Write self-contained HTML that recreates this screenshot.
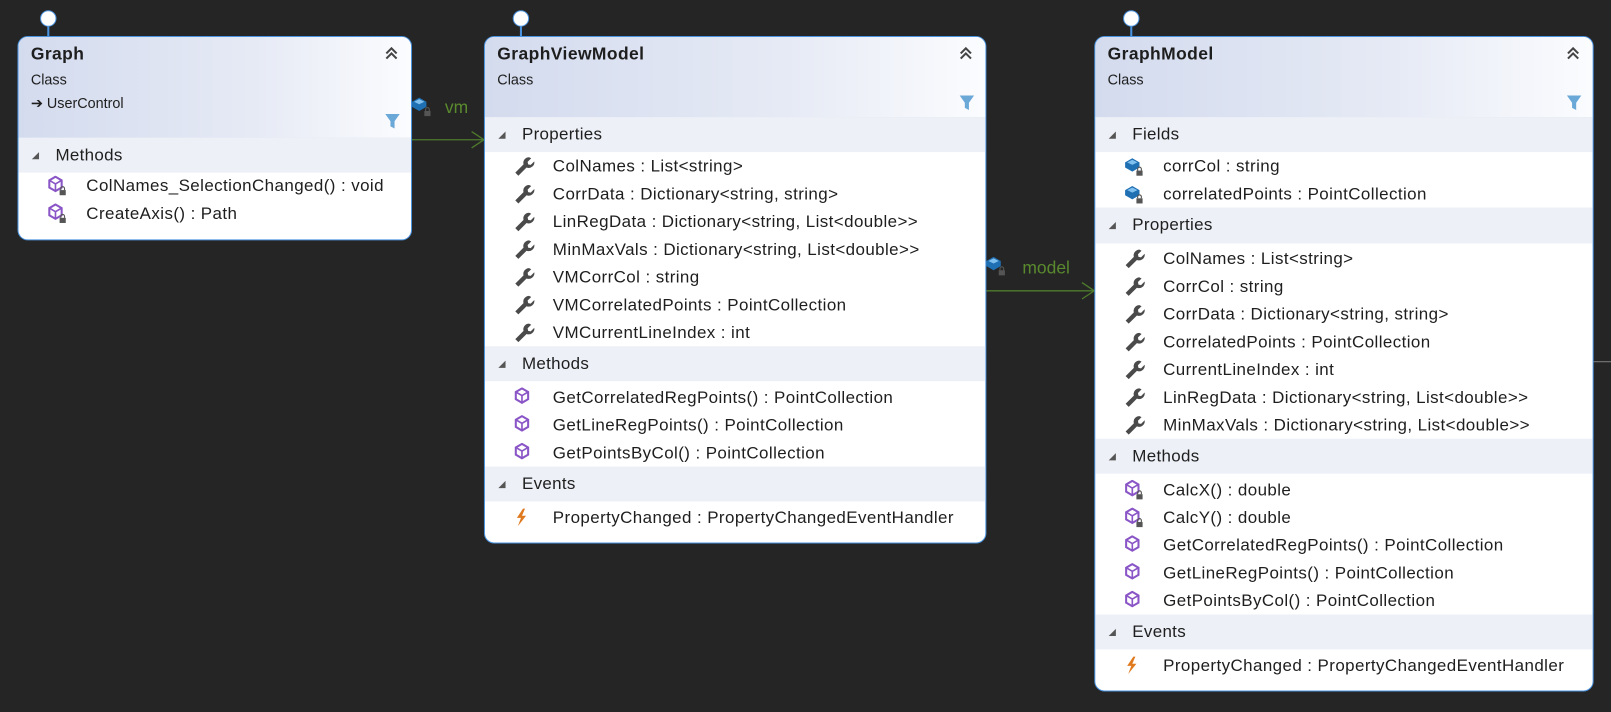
<!DOCTYPE html>
<html><head><meta charset="utf-8"><style>
html,body{margin:0;padding:0;background:#252525;width:1611px;height:712px;overflow:hidden}
#w{position:absolute;left:0;top:0;width:1568px;height:693px;transform:scale(1.0275);transform-origin:0 0;font-family:"Liberation Sans",sans-serif;color:#1e1e1e}
.box{position:absolute;background:#fff;border:1.5px solid #4a93e0;border-radius:10px;overflow:hidden;box-sizing:border-box}
.hd{position:absolute;left:0;top:0;right:0;background:linear-gradient(90deg,#d3dbee 0%,#e6eaf5 60%,#fbfcfe 100%);border-bottom:1px solid #d8dce6}
.t{position:absolute;left:12px;top:7px;font-weight:bold;font-size:17px;letter-spacing:0.4px}
.c{position:absolute;left:12px;top:33px;font-size:14px}
.u{position:absolute;left:12px;top:56px;font-size:14px}
.sh{position:absolute;left:0;right:0;height:34px;background:#edf0f7;font-size:16.5px;line-height:35px;letter-spacing:0.3px}
.sh span{position:absolute;left:36px}
.sh i{position:absolute;left:13px;top:14px;width:0;height:0;border-left:7px solid transparent;border-bottom:7px solid #555}
.r{position:absolute;left:0;right:0;height:27px;line-height:28px;font-size:16.5px;letter-spacing:0.4px;white-space:nowrap}
.r span{position:absolute;left:66px}
.r svg{position:absolute;left:28px;top:4px}
.chev{position:absolute;right:12px;top:8px}
.fil{position:absolute;right:10px}
.circ{position:absolute;width:14px;height:14px;border-radius:50%;background:#fff;border:1.5px solid #4a93e0;top:10px}
.vl{position:absolute;width:1.5px;background:#4a93e0;top:25px;height:11px}
.lbl{position:absolute;color:#5a8a2e;font-size:17px}
</style></head><body><div id="w">
<svg width="0" height="0" style="position:absolute">
<defs>
<g id="wr"><path d="M15 1a5.5 5.5 0 0 0-5.5 7L1.5 16l3 3 8-8A5.5 5.5 0 0 0 20 5l-3.5 3.5-2.5-.5-.5-2.5L17 2z" fill="#4a4a4a"/></g>
<g id="mt"><path d="M8 1l6 3.5v7L8 15l-6-3.5v-7z" fill="none" stroke="#8a55c6" stroke-width="2"/><path d="M2 4.5L8 8l6-3.5M8 8v7" fill="none" stroke="#8a55c6" stroke-width="1.6"/></g>
<g id="lk"><rect x="12" y="14" width="6" height="5" fill="#555"/><path d="M13.2 14v-1.5a1.8 1.8 0 0 1 3.6 0V14" fill="none" stroke="#555" stroke-width="1.1"/></g>
<g id="fd"><path d="M1 6l7-4 7 4v5l-7 4-7-4z" fill="#1f6fb3"/><path d="M3 6l5-2.5 5 2.5-5 2.5z" fill="#7fc0ee"/></g>
<g id="ev"><path d="M9 1L3 10h4l-3 8 8-10H8l3-7z" fill="#e07a1f"/></g>
<g id="ch"><path d="M2 8l5-5 5 5M2 13l5-5 5 5" fill="none" stroke="#444" stroke-width="2"/></g>
<g id="fi"><path d="M1 1h14l-5 7v7l-4-2V8z" fill="#6aa8d8"/></g>
</defs></svg>

<div class="vl" style="left:46px"></div><div class="circ" style="left:39px"></div>
<div class="vl" style="left:506px"></div><div class="circ" style="left:499px"></div>
<div class="vl" style="left:1100px"></div><div class="circ" style="left:1093px"></div>

<svg style="position:absolute;left:0;top:0" width="1568" height="693">
<path d="M400 136H471M459 128l12 8-12 8" fill="none" stroke="#4e7a2c" stroke-width="1.3"/>
<path d="M959 283H1065M1053 275l12 8-12 8" fill="none" stroke="#4e7a2c" stroke-width="1.3"/>
<path d="M1550 352H1568" stroke="#777" stroke-width="1"/>
<g transform="translate(400,93)"><use href="#fd"/><use href="#lk" transform="translate(1,1)"/></g>
<g transform="translate(959,248)"><use href="#fd"/><use href="#lk" transform="translate(1,1)"/></g>
</svg>
<div class="lbl" style="left:433px;top:95px">vm</div>
<div class="lbl" style="left:995px;top:251px">model</div>

<div class="box" style="left:17px;top:35px;width:384px;height:199px">
<div class="hd" style="height:98px"><div class="t">Graph</div><div class="c">Class</div><div class="u">➔ UserControl</div>
<svg class="chev" width="14" height="14"><use href="#ch"/></svg><svg class="fil" style="top:74px" width="16" height="16"><use href="#fi"/></svg></div>
<div class="sh" style="top:98px"><i></i><span>Methods</span></div>
<div class="r" style="top:131px"><svg width="22" height="20"><use href="#mt"/><use href="#lk"/></svg><span>ColNames_SelectionChanged() : void</span></div>
<div class="r" style="top:158px"><svg width="22" height="20"><use href="#mt"/><use href="#lk"/></svg><span>CreateAxis() : Path</span></div>
</div>

<div class="box" style="left:471px;top:35px;width:489px;height:494px">
<div class="hd" style="height:78px"><div class="t">GraphViewModel</div><div class="c">Class</div>
<svg class="chev" width="14" height="14"><use href="#ch"/></svg><svg class="fil" style="top:56px" width="16" height="16"><use href="#fi"/></svg></div>
<div class="sh" style="top:78px"><i></i><span>Properties</span></div>
<div class="r" style="top:112px"><svg width="22" height="20"><use href="#wr"/></svg><span>ColNames : List&lt;string&gt;</span></div>
<div class="r" style="top:139px"><svg width="22" height="20"><use href="#wr"/></svg><span>CorrData : Dictionary&lt;string, string&gt;</span></div>
<div class="r" style="top:166px"><svg width="22" height="20"><use href="#wr"/></svg><span>LinRegData : Dictionary&lt;string, List&lt;double&gt;&gt;</span></div>
<div class="r" style="top:193px"><svg width="22" height="20"><use href="#wr"/></svg><span>MinMaxVals : Dictionary&lt;string, List&lt;double&gt;&gt;</span></div>
<div class="r" style="top:220px"><svg width="22" height="20"><use href="#wr"/></svg><span>VMCorrCol : string</span></div>
<div class="r" style="top:247px"><svg width="22" height="20"><use href="#wr"/></svg><span>VMCorrelatedPoints : PointCollection</span></div>
<div class="r" style="top:274px"><svg width="22" height="20"><use href="#wr"/></svg><span>VMCurrentLineIndex : int</span></div>
<div class="sh" style="top:301px"><i></i><span>Methods</span></div>
<div class="r" style="top:337px"><svg width="22" height="20"><use href="#mt"/></svg><span>GetCorrelatedRegPoints() : PointCollection</span></div>
<div class="r" style="top:364px"><svg width="22" height="20"><use href="#mt"/></svg><span>GetLineRegPoints() : PointCollection</span></div>
<div class="r" style="top:391px"><svg width="22" height="20"><use href="#mt"/></svg><span>GetPointsByCol() : PointCollection</span></div>
<div class="sh" style="top:418px"><i></i><span>Events</span></div>
<div class="r" style="top:454px"><svg width="22" height="20"><use href="#ev"/></svg><span>PropertyChanged : PropertyChangedEventHandler</span></div>
</div>

<div class="box" style="left:1065px;top:35px;width:486px;height:638px">
<div class="hd" style="height:78px"><div class="t">GraphModel</div><div class="c">Class</div>
<svg class="chev" width="14" height="14"><use href="#ch"/></svg><svg class="fil" style="top:56px" width="16" height="16"><use href="#fi"/></svg></div>
<div class="sh" style="top:78px"><i></i><span>Fields</span></div>
<div class="r" style="top:112px"><svg width="22" height="20"><use href="#fd"/><use href="#lk"/></svg><span>corrCol : string</span></div>
<div class="r" style="top:139px"><svg width="22" height="20"><use href="#fd"/><use href="#lk"/></svg><span>correlatedPoints : PointCollection</span></div>
<div class="sh" style="top:166px;height:35px"><i></i><span>Properties</span></div>
<div class="r" style="top:202px"><svg width="22" height="20"><use href="#wr"/></svg><span>ColNames : List&lt;string&gt;</span></div>
<div class="r" style="top:229px"><svg width="22" height="20"><use href="#wr"/></svg><span>CorrCol : string</span></div>
<div class="r" style="top:256px"><svg width="22" height="20"><use href="#wr"/></svg><span>CorrData : Dictionary&lt;string, string&gt;</span></div>
<div class="r" style="top:283px"><svg width="22" height="20"><use href="#wr"/></svg><span>CorrelatedPoints : PointCollection</span></div>
<div class="r" style="top:310px"><svg width="22" height="20"><use href="#wr"/></svg><span>CurrentLineIndex : int</span></div>
<div class="r" style="top:337px"><svg width="22" height="20"><use href="#wr"/></svg><span>LinRegData : Dictionary&lt;string, List&lt;double&gt;&gt;</span></div>
<div class="r" style="top:364px"><svg width="22" height="20"><use href="#wr"/></svg><span>MinMaxVals : Dictionary&lt;string, List&lt;double&gt;&gt;</span></div>
<div class="sh" style="top:391px"><i></i><span>Methods</span></div>
<div class="r" style="top:427px"><svg width="22" height="20"><use href="#mt"/><use href="#lk"/></svg><span>CalcX() : double</span></div>
<div class="r" style="top:454px"><svg width="22" height="20"><use href="#mt"/><use href="#lk"/></svg><span>CalcY() : double</span></div>
<div class="r" style="top:481px"><svg width="22" height="20"><use href="#mt"/></svg><span>GetCorrelatedRegPoints() : PointCollection</span></div>
<div class="r" style="top:508px"><svg width="22" height="20"><use href="#mt"/></svg><span>GetLineRegPoints() : PointCollection</span></div>
<div class="r" style="top:535px"><svg width="22" height="20"><use href="#mt"/></svg><span>GetPointsByCol() : PointCollection</span></div>
<div class="sh" style="top:562px"><i></i><span>Events</span></div>
<div class="r" style="top:598px"><svg width="22" height="20"><use href="#ev"/></svg><span>PropertyChanged : PropertyChangedEventHandler</span></div>
</div>
</div></body></html>
